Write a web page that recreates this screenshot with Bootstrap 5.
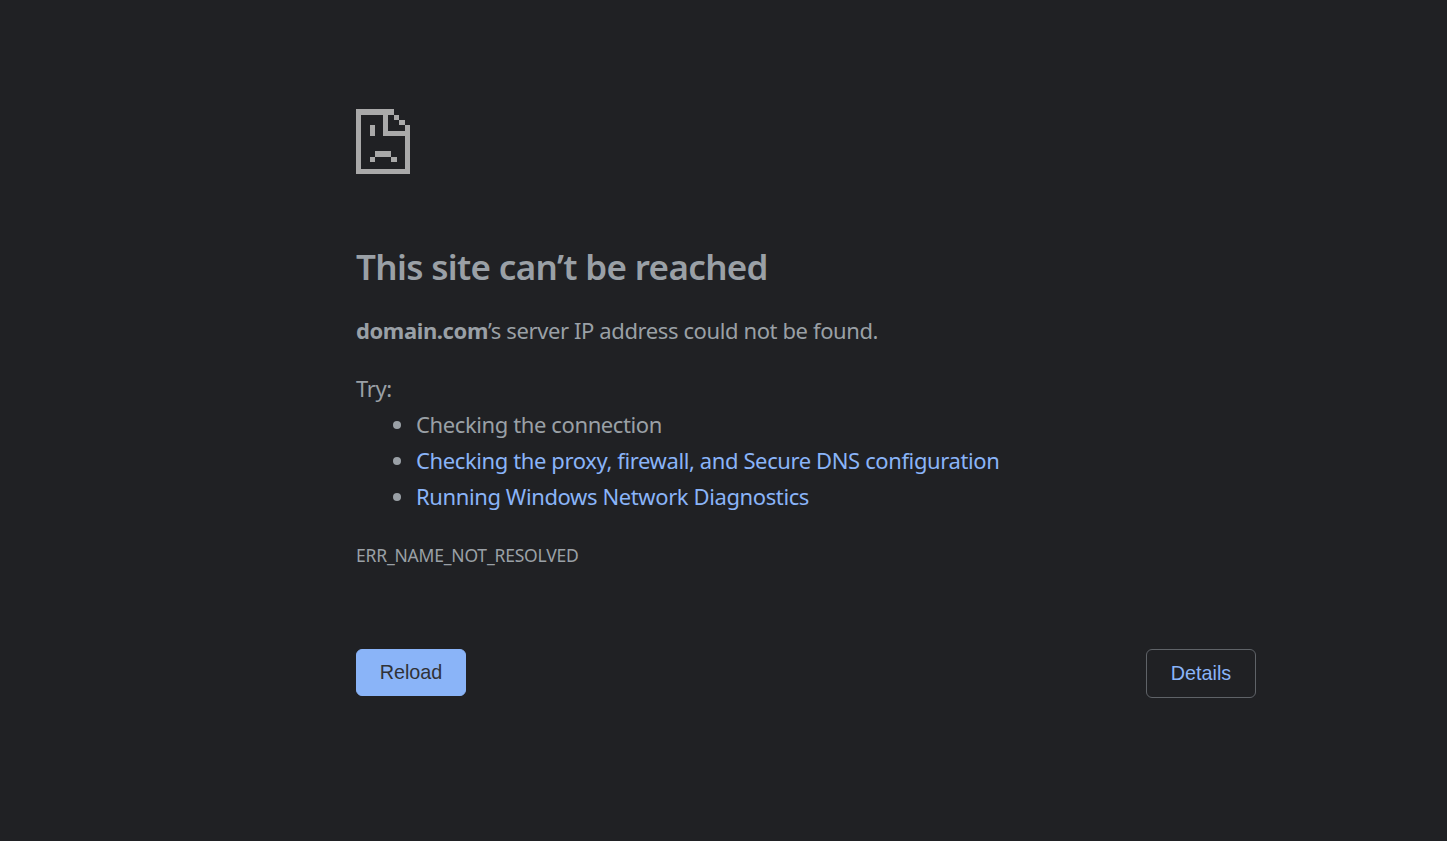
<!DOCTYPE html>
<html lang="en">
<head>
  <meta charset="UTF-8" />
  <meta name="viewport" content="width=device-width, initial-scale=1" />
  <title>domain.com</title>
  <link href="https://cdn.jsdelivr.net/npm/bootstrap@5.3.0/dist/css/bootstrap.min.css" rel="stylesheet" />
  <style>
    html, body {
      height: 100%;
    }

    body {
      background: #202124;
      color: #9aa0a6;
      font-family: "Noto Sans", "Liberation Sans", sans-serif;
      font-size: 22px;
      letter-spacing: -0.39px;
      line-height: 36px;
    }

    .error-page {
      width: 900px;
      margin-left: 356px;
      padding-top: 109px;
    }

    .error-icon {
      display: block;
      width: 54px;
      height: 65px;
      margin-bottom: 68px;
    }

    .error-title {
      color: #9aa0a6;
      font-size: 35px;
      font-weight: 600;
      letter-spacing: -0.66px;
      line-height: 50px;
      margin-bottom: 20px;
    }

    .error-page a {
      color: #8ab4f8;
      text-decoration: none;
    }

    .server-line {
      margin-bottom: 22px;
    }

    .try-list {
      padding-left: 60px;
      margin-bottom: 23px;
    }

    .error-code {
      font-size: 17.5px;
      letter-spacing: -0.2px;
      line-height: 36px;
      margin-bottom: 76px;
    }

    .btn-reload, .btn-details {
      font-family: "Liberation Sans", Arial, sans-serif;
      font-size: 19.8px;
      letter-spacing: 0;
      line-height: 24px;
      width: 110px;
      border-radius: 6px;
    }

    .btn-reload {
      background: #8ab4f8;
      border: 1px solid #8ab4f8;
      color: #303236;
      padding: 9.5px 0 11.5px;
    }

    .btn-details {
      background: transparent;
      border: 1px solid #5f6368;
      color: #8ab4f8;
      padding: 10.5px 0 12.5px;
    }
  </style>
</head>
<body>
  <div class="error-page">
    <svg class="error-icon" viewBox="0 0 10 12" fill="#a9a9a9" shape-rendering="crispEdges" aria-hidden="true">
      <path d="M0 0H7V1H1V11H9V5H5V1H6V4H9V3H10V12H0Z" />
      <path d="M7 1H8V2H7ZM8 2H9V3H8ZM2.5 3H3.5V5H2.5ZM3.5 7.8H6.5V8.8H3.5ZM2.5 8.8H3.5V9.8H2.5ZM6.5 8.8H7.5V9.8H6.5Z" />
    </svg>

    <h1 class="error-title">This site can’t be reached</h1>
    <p class="server-line"><strong>domain.com</strong>’s server IP address could not be found.</p>

    <div>Try:</div>
    <ul class="try-list">
      <li>Checking the connection</li>
      <li><a href="#">Checking the proxy, firewall, and Secure DNS configuration</a></li>
      <li><a href="#">Running Windows Network Diagnostics</a></li>
    </ul>

    <div class="error-code">ERR_NAME_NOT_RESOLVED</div>

    <div class="d-flex justify-content-between align-items-start">
      <button type="button" class="btn btn-reload">Reload</button>
      <button type="button" class="btn btn-details">Details</button>
    </div>
  </div>
</body>
</html>
